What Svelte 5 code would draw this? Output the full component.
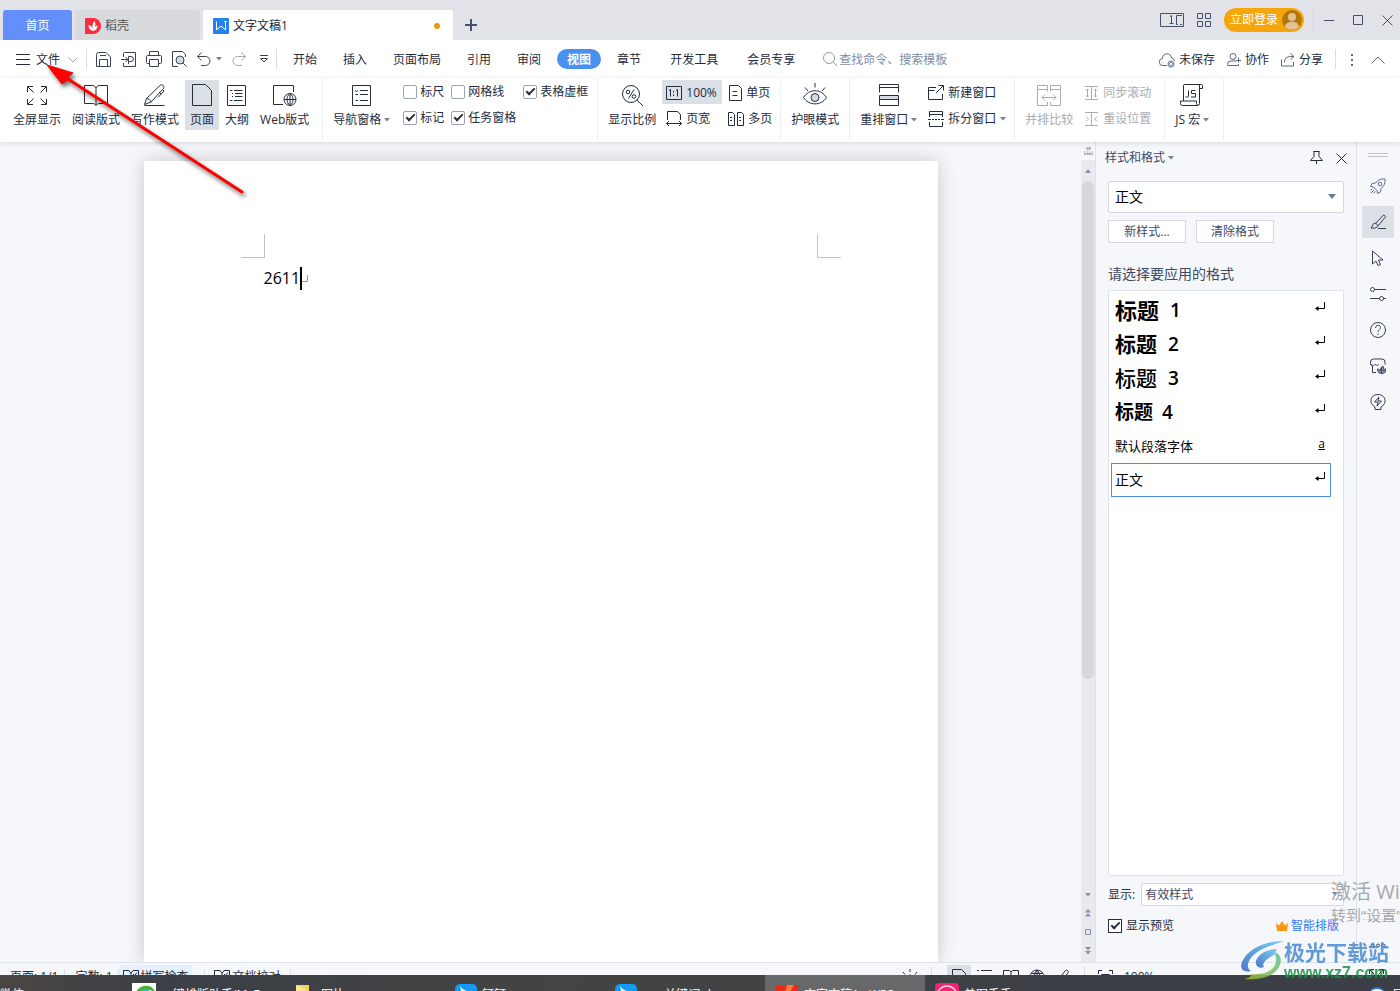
<script>
  const icons = {
    docer: '<path d="M0 0h8a8 8 0 0 1 0 16H0z" fill="#fb2c3c" stroke="none"/><path d="M8 13C4.500 12 3.500 10 3.500 7c2 .5 3.500 2 4 4C7 8 7.500 5 9.500 3c1.500 2.500 1 5.500-.5 8 .5-2 1.500-3 3.500-3.500 0 3-1.500 5-4.500 5.500z" fill="#fff" stroke="none"/>',
    writer: '<rect width="16" height="16" rx="1" fill="#2583f0" stroke="none"/><path d="M3.500 3.500v8.500L8 8l4.500 4V3.500M11 3.500h3" stroke="#fff"/>',
    plus: '<path d="M6 0v12M0 6h12" stroke-width="2"/>',
    pages: '<path d="M.5 .5h23v13H.5zM10 3.500l1.500-1v8.500M9.500 10.500h4"/><path d="M22 2.500h-5.500v9H18M20 11.500h2"/>',
    apps: '<path d="M.5.5h5v5h-5zM8.500.5h5v5h-5zM.5 8.500h5v5h-5zM8.500 8.500h5v5h-5z"/>',
    avatar: '<circle cx="10" cy="10" r="10" fill="#b27708" stroke="none"/><circle cx="10" cy="7" r="4" fill="#e0c391" stroke="none"/><path d="M3 17c0-7 14-7 14 0a10 10 0 0 1-14 0z" fill="#e0c391" stroke="none"/>',
    min: '<path d="M0 5.500h10"/>',
    max: '<path d="M.5.5h9v9h-9z"/>',
    close: '<path d="M.5.5l10 10M10.500.5l-10 10"/>',
    menu: '<path d="M0 .5h14M0 5.500h14M0 10.500h14"/>',
    down: '<path d="M.5.5L5 5l4.500-4.500"/>',
    up: '<path d="M.5 7.500l6.500-6.500 6.500 6.500"/>',
    save: '<path d="M.5 14.500V2.500a2 2 0 0 1 2-2H10L14.500 5v9.500zM3.500 14.500V7.500h8v7M4 3.500h6"/>',
    pdf: '<path d="M2.500 5V1.500a1 1 0 0 1 1-1h11v14h-12V11M0 7.500h7M4.500 5L7 7.500 4.500 10M7.500 12V4.500H10a2.500 2.500 0 0 1 0 5H7"/>',
    print: '<path d="M3.500 4V.5h9V4M3.500 12.500H1.500a1 1 0 0 1-1-1V5.500a1 1 0 0 1 1-1h13a1 1 0 0 1 1 1v6a1 1 0 0 1-1 1h-2M3.500 8.500h9v7h-9z"/>',
    preview: '<path d="M6 15.500H.5V.5h10l3 3V6"/><circle cx="8" cy="9" r="4" fill="#d5d9e0"/><path d="M11 12l3.500 3.500"/>',
    undo: '<path d="M4.500.5L.5 4.500l4 4M.5 4.500H8.500a4.500 4.500 0 0 1 0 9H4"/>',
    redo: '<path d="M9.500.5l4 4-4 4M13.500 4.500H5.500a4.500 4.500 0 0 0 0 9H10"/>',
    caret: '<path d="M0 0h6L3 3.500z" fill="currentColor" stroke="none"/>',
    caretUp: '<path d="M0 4h6L3 0z" fill="currentColor" stroke="none"/>',
    more: '<path d="M0 .5h8M.5 3.500h7L4 7z"/>',
    search: '<circle cx="6" cy="6" r="5.500"/><path d="M10 10l4 4"/>',
    cloud: '<path d="M8 12.500H4a3.500 3.500 0 0 1-.5-7 4.500 4.500 0 0 1 9-.5 3.500 3.500 0 0 1 3 3"/><circle cx="12" cy="11" r="3.500" fill="#8a94ad" stroke="none"/><path d="M10.500 9.500l3 3m0-3l-3 3" stroke="#fff"/>',
    collab: '<circle cx="6" cy="3.500" r="3"/><path d="M9 8H4A3.500 3.500 0 0 0 .5 11.500v1h11v-1.500M11.500 4.500v5M9 7.500h5"/>',
    share: '<path d="M.5 6.500v6.500h12v-4M3.500 9.500c0-4 2-6 6.500-6h3M9.500 .5l3.500 3-3.500 3"/>',
    dots: '<path d="M0 0h2v2H0zM0 5h2v2H0zM0 10h2v2H0z" fill="currentColor" stroke="none"/>',
    full: '<path d="M2.500 9V3.500H8M3 4l5.500 5.500M16 3.500h5.500V9M21 4l-5.500 5.500M2.500 16v5.500H8M3 21l5.500-5.500M16 21.500h5.500V16M21 21l-5.500-5.500"/>',
    read: '<path d="M12 5c-1-2-2.500-2.500-4-2.500H.5v18H8c2 0 3 .5 4 2 1-1.500 2-2 4-2h7.500v-18H16c-1.500 0-3 .5-4 2.500zM12 5v17"/>',
    write: '<path d="M3.500 15.500L17 2.500c2-2 5 .5 3.500 3L8 19l-6.500 2.500zM3.500 15.500c2 0 4 1.500 4.500 3.500M16 9l2 2M1.500 22.500h20M20 7l1 1-6 6.500"/>',
    page: '<path d="M2.500 1.500h13l6 6v15h-19z"/>',
    outline: '<path d="M2.500 2.500h18v20h-18zM5 7.500h2.500M9 7.500h8.500M7 10.500h1M10 10.500h7.500M7 13.500h1M10 13.500h7.500M5 17.500h2.500M9 17.500h8.500"/>',
    web: '<path d="M10 21.500H.5V2.500h20V9"/><circle cx="17" cy="16.500" r="6"/><path d="M11 16.500h12M17 10.500c-4 3-4 9 0 12 4-3 4-9 0-12zM17 10.500v12"/>',
    nav: '<path d="M2.500 2.500h18v20h-18zM5 7.500l1.500 1L8 7.500M10 7.500h8M5.500 11.500H8M10 11.500h8M5.500 17.500H8M10 17.500h8"/>',
    zoom: '<circle cx="11" cy="11" r="8.500"/><path d="M17 17l6 6M14 6.500L8.500 15.500"/><circle cx="8" cy="9" r="1.800"/><circle cx="14" cy="13.500" r="1.800"/>',
    one: '<path d="M.5.500h15v13H.5zM3 4.500l1.500-1v7M10 4.500l1.500-1v7M7.500 5v1.500M7.500 8.500v1.500"/>',
    width: '<path d="M1.500 9V.5h10l3 3V9M0 12.500h16M3 10l-2.500 2.500L3 15M13 10l2.500 2.500L13 15"/>',
    single: '<path d="M.5.5h9l3 3v12H.5zM3.500 6.500H8M3.500 10.500h5"/>',
    multi: '<path d="M.5 1.500h4l2 2v11h-6zM9.500 1.500h4l2 2v11h-6zM2 6.500h2M2 9.500h2M11 6.500h2M11 9.500h2"/>',
    eye: '<path d="M.5 14.500C6 5.500 18 5.500 23.500 14.500 18 23 6 23 .5 14.500zM12 0v4.500M2 4.500L5 8M22 4.500L19 8"/><circle cx="12" cy="14.500" r="4" fill="#d5d9e0"/>',
    arrange: '<path d="M2.500 9.500v-8h19v8M2.500 4.500h19M2.500 12.500h19v10h-19z"/><path d="M3 13h18v3H3z" fill="#d5d9e0" stroke="none"/><path d="M2.500 16.500h19"/>',
    newwin: '<path d="M8 2.500H.5v12h14V9M.5 5.500h6M10.500.5h5v5M15.500.5L8 8"/>',
    split: '<path d="M1.500 6V.5h13V6M1.500 3.500h13M0 8.500h3m1 0h2m1 0h2m1 0h2m1 0h3M1.500 11v4.500h13V11"/>',
    compare: '<path d="M8 22.500H.5v-20h10v6M.5 6.500h10M16 22.500h7.500v-20h-10v6M23.500 6.500h-10M5 14.500h14M8 11.500l-3 3 3 3M16 11.500l3 3-3 3M10.500 19v3.500H8M13.500 19v3.500H16"/>',
    sync: '<path d="M0 .5h13M0 13.500h13M6.500.5v13M2.500 3v8M1 4.500L2.500 3 4 4.500M1 9.500L2.500 11 4 9.500M10.500 3v8M9 4.500L10.500 3 12 4.500M9 9.500l1.500 1.500L12 9.500"/>',
    reset: '<path d="M0 .5h13M0 13.500h13M6.500.5v13M1 4.500L3.500 7 1 9.500M12 4.500L9.500 7 12 9.500"/>',
    js: '<path d="M3.500 18V2.500a1 1 0 0 1 1-1h17a1 1 0 0 1 1 1v3h-3.500M19.500 2v18.500a2 2 0 0 1-2 2h-15a2 2 0 0 1-2-2v-2.500h16v2.500a2 2 0 0 0 1.500 2M8.500 7.500v5.500c0 1.500-2 1.500-3 .5M15.500 7.500h-4v3h4v3.500h-4.500"/>',
    pin: '<path d="M3.500.5h6M4 .5v5L.5 9.500h12L9 5.500v-5M6.500 9.500V13"/>',
    bars: '<path d="M0 .5h20M0 3.500h20" stroke="#bfc4ce"/>',
    rocket: '<path d="M15 1C10.500.5 8 2 5.500 5L2 5.500.5 8.500l3 .5L7 12.500l.5 3 3-1.500.5-3.500C14 8 15.500 5.500 15 1zM4 12l-3 3M2.500 10.500L.5 12.500M5.500 13.500l-2 2"/><circle cx="10" cy="6" r="1.800"/>',
    brush: '<path d="M5.500 9.500L13 1.500c1-1 3 .5 2 2L8 12M5.500 9c-3 0-2.500 3-4.500 5 3 .5 6.500 0 7-2.500zM8 14.500h8"/>',
    cursor: '<path d="M2.500 1v13l3.500-3 2 4.500 2.500-1L8.500 10H13z"/>',
    sliders: '<circle cx="2.500" cy="3.500" r="2"/><path d="M4.500 3.500H16M0 12.500h9M13 12.500h3"/><circle cx="11.500" cy="12.500" r="2"/>',
    help: '<circle cx="8" cy="8" r="7.500"/><path d="M5.500 6c0-3.500 5-3.500 5-.5C10.500 7.500 8 7.500 8 10M8 11.500v1.500"/>',
    shop: '<path d="M6 14.500H2.500V8C.5 7.500.5 5 .5 4a3 3 0 0 1 3-3h8.500a3 3 0 0 1 3 3v2.500M.5 6c2 2.500 4 1.500 4.500 0 .5 1.500 3 2 4 0"/><path d="M11.500 15.500c-3 0-4-2-4-4.500 1.500 0 2.500 1 3 2 0-2 .5-4 2-5 1.500 1 1.500 3 1 5 .5-1 1-2 2.500-2 0 3-1.500 4.500-4.500 4.500zM11.500 15V10" fill="#8e96a8"/>',
    bulb: '<path d="M5 13C-1.500 9.500 0 .5 8 .5s9.500 9 3 12.500v2.500H5zM9 3L4.500 8H8l-1 4 4.500-5H8z"/>',
    ret: '<path d="M9.500 0v6.500H1"/><path d="M0 6.500L3.500 4v5z" fill="currentColor" stroke="none"/>',
    crown: '<path d="M0 2l3 2.500L6 0l3 4.500L12 2l-1 8H1z" fill="#ff9511" stroke="none"/>',
    ruler: '<path d="M2 0h5v3H2zM0 4h1v2h2V4h1v2h1V4h1v2h2V4h1v4H0z" fill="#b4bccd" stroke="none"/>',
    dblUp: '<path d="M0 3.500h6L3 0zM0 7.500h6L3 4z" fill="currentColor" stroke="none"/>',
    dblDown: '<path d="M0 0h6L3 3.500zM0 4h6L3 7.500z" fill="currentColor" stroke="none"/>',
    square: '<path d="M.5.5h5v5h-5z"/>',
    threeDots: '<circle cx="2.500" cy="2.500" r="1.500"/><circle cx="8" cy="2.500" r="1.500"/><circle cx="13.500" cy="2.500" r="1.500"/>',
    book: '<path d="M8 4.500L6 1.500H.5v13H8zM8 4.500l2-3h5.500v13H8M10 5l1.500 1.500L14 3.500"/>',
    sun: '<circle cx="8" cy="10" r="4"/><path d="M8 0v3M1 3l2 2.500M15 3l-2 2.500"/>',
    docSmall: '<path d="M1.500.5h9l4 4v11h-13z"/>',
    list: '<path d="M0 1.500h2M4 1.500h11M0 6.500h2M4 6.500h11M0 11.500h2M4 11.500h11"/>',
    bookSmall: '<path d="M8 3L6.500 1.500h-6v13H8zM8 3l1.500-1.500h6v13H8"/>',
    globe: '<circle cx="8" cy="8" r="7"/><path d="M1 8h14M2 4.500h12M8 1v14M8 1c-4 4-4 10 0 14 4-4 4-10 0-14z"/>',
    pen: '<path d="M1 14L10 2c2-2 4 0 3 2L5 13z"/>',
    fit: '<path d="M.5 5V1.500H4M11 1.500h3.500V5M3.500 5.500h8v5h-8z"/>',
    expand: '<path d="M.5 5V.5H5M.5.5l5 5M10 .5h4.500V5M14.500.5l-5 5"/>',
    swirl: '<path d="M0 0h24v24H0z" fill="#fff" stroke="none"/><path d="M2 14C4 1 20-1 23 9c-8-4-13-2-16 9z" fill="#45b52f" stroke="none"/><path d="M6 15C8 6 16 4 20 10c-5 0-9 3-10 9z" fill="#41b5f0" stroke="none"/>',
    folder: '<path d="M0 0h13v20H0z" fill="#f5cf68" stroke="none"/><path d="M0 0l10 4v16H0z" fill="#ffe293" stroke="none"/>',
    ding: '<rect width="22" height="22" rx="5" fill="#129bf5" stroke="none"/><path d="M5 2c2 4 8 5 12 8l-5 9-5-8z" fill="#fff" stroke="none"/>',
    wps: '<path d="M0 2h24l-5 18h-7l-2-7-3 7H4z" fill="#f0281c" stroke="none"/><path d="M12 2h7l-5 9-4-1z" fill="#ff7a2e" stroke="none"/>',
    pink: '<rect width="24" height="24" rx="4" fill="#f4236f" stroke="none"/><circle cx="12" cy="13" r="10" stroke="#ffd6e6" stroke-width="1.500"/>',
    ball: '<circle cx="8" cy="8" r="8" fill="#2577e8" stroke="none"/><ellipse cx="8" cy="5" rx="6" ry="3" fill="#fff" stroke="none"/>'
  };

  const tabs = ['开始', '插入', '页面布局', '引用', '审阅', '视图', '章节', '开发工具', '会员专享'];
  const styles = [
    { name: '标题', n: '1', cls: 'h1' },
    { name: '标题', n: '2', cls: 'h2' },
    { name: '标题', n: '3', cls: 'h3' },
    { name: '标题', n: '4', cls: 'h4' },
    { name: '默认段落字体', cls: 'char' },
    { name: '正文', cls: 'body' }
  ];
  const side = ['rocket', 'brush', 'cursor', 'sliders', 'help', 'shop', 'bulb'];
  const checks = [
    { t: '标尺', on: false }, { t: '网格线', on: false }, { t: '表格虚框', on: true },
    { t: '标记', on: true }, { t: '任务窗格', on: true }
  ];
</script>

{#snippet icon(name, w, h = w)}
  <svg class="icon" width={w} height={h} viewBox="0 0 {w} {h}" aria-hidden="true">{@html icons[name]}</svg>
{/snippet}

{#snippet big(name, label, cls = '', menu = false)}
  <button class="big {cls}">
    {@render icon(name, 24)}
    <span class="label">{label}{#if menu}<span class="car">{@render icon('caret', 6, 4)}</span>{/if}</span>
  </button>
{/snippet}

{#snippet small(name, w, h, label, cls = '', menu = false)}
  <button class="small {cls}">
    <span class="slot">{@render icon(name, w, h)}</span><span>{label}</span>{#if menu}<span class="car">{@render icon('caret', 6, 4)}</span>{/if}
  </button>
{/snippet}

<div class="app">
  <header class="titlebar">
    <button class="doc home">首页</button>
    <button class="doc docer">{@render icon('docer', 16)}稻壳</button>
    <button class="doc current">{@render icon('writer', 16)}文字文稿1<i class="dirty"></i></button>
    <button class="add" aria-label="新建">{@render icon('plus', 12)}</button>
    <div class="window">
      <button aria-label="窗口">{@render icon('pages', 24, 14)}</button>
      <button class="apps" aria-label="应用">{@render icon('apps', 14)}</button>
      <button class="login">立即登录{@render icon('avatar', 20)}</button>
      <i class="sep"></i>
      <button class="w" aria-label="最小化">{@render icon('min', 10)}</button>
      <button class="w" aria-label="最大化">{@render icon('max', 10)}</button>
      <button class="w" aria-label="关闭">{@render icon('close', 11)}</button>
    </div>
  </header>

  <nav class="menubar">
    <button class="file">{@render icon('menu', 14, 12)}<span>文件</span><span class="muted">{@render icon('down', 10, 6)}</span></button>
    <i class="sep"></i>
    <div class="quick">
      <button aria-label="保存">{@render icon('save', 15)}</button>
      <button aria-label="输出为PDF">{@render icon('pdf', 15)}</button>
      <button aria-label="打印">{@render icon('print', 16)}</button>
      <button aria-label="打印预览">{@render icon('preview', 15, 16)}</button>
      <button class="undo" aria-label="撤消">{@render icon('undo', 14)}<span class="car">{@render icon('caret', 6, 4)}</span></button>
      <button class="muted" aria-label="恢复">{@render icon('redo', 14)}</button>
      <button class="morebtn" aria-label="更多">{@render icon('more', 8)}</button>
    </div>
    <i class="sep"></i>
    <div class="tabs">
      {#each tabs as t, i}
        <button class:active={t === '视图'} class:extra={i > 6}>{t}</button>
      {/each}
    </div>
    <label class="search">{@render icon('search', 15)}<input aria-label="查找" placeholder="查找命令、搜索模板" /></label>
    <div class="account">
      <button>{@render icon('cloud', 16, 15)}未保存</button>
      <button>{@render icon('collab', 14)}协作</button>
      <button>{@render icon('share', 14)}分享</button>
      <i class="sep"></i>
      <button class="dots" aria-label="更多">{@render icon('dots', 2, 12)}</button>
      <button aria-label="收起">{@render icon('up', 14, 8)}</button>
    </div>
  </nav>

  <section class="ribbon">
    <div class="group first">
      {@render big('full', '全屏显示')}
      {@render big('read', '阅读版式')}
      {@render big('write', '写作模式')}
      {@render big('page', '页面', 'on')}
      {@render big('outline', '大纲')}
      {@render big('web', 'Web版式')}
    </div>
    <div class="group">
      {@render big('nav', '导航窗格', '', true)}
      <div class="checks">
        {#each checks as c}
          <label><input type="checkbox" checked={c.on} />{c.t}</label>
        {/each}
      </div>
    </div>
    <div class="group">
      {@render big('zoom', '显示比例')}
      <div class="pairs">
        {@render small('one', 16, 14, '100%', 'on')}
        {@render small('single', 13, 16, '单页')}
        {@render small('width', 16, 16, '页宽')}
        {@render small('multi', 16, 16, '多页')}
      </div>
    </div>
    <div class="group">{@render big('eye', '护眼模式')}</div>
    <div class="group">
      {@render big('arrange', '重排窗口', '', true)}
      <div class="stack">
        {@render small('newwin', 16, 16, '新建窗口')}
        {@render small('split', 16, 16, '拆分窗口', '', true)}
      </div>
    </div>
    <div class="group dim">
      {@render big('compare', '并排比较')}
      <div class="stack">
        {@render small('sync', 13, 14, '同步滚动')}
        {@render small('reset', 13, 14, '重设位置')}
      </div>
    </div>
    <div class="group">{@render big('js', 'JS 宏', '', true)}</div>
  </section>

  <main class="workspace">
    <div class="canvas">
      <article class="page">
        <i class="corner left"></i>
        <i class="corner right"></i>
        <p>2611<i class="cursor"></i><span class="ret">{@render icon('ret', 10)}</span></p>
      </article>
    </div>
    <div class="scroll">
      <div class="rulerbtn">{@render icon('ruler', 9, 8)}</div>
      <div class="arrow">{@render icon('caretUp', 6, 4)}</div>
      <div class="track"><div class="thumb"></div></div>
      <div class="jump">
        {@render icon('caret', 6, 4)}
        {@render icon('dblUp', 6, 8)}
        {@render icon('square', 6)}
        {@render icon('dblDown', 6, 8)}
      </div>
    </div>
    <aside class="panel">
      <div class="head">
        <span>样式和格式</span><span class="car">{@render icon('caret', 6, 4)}</span>
        <button class="push" aria-label="固定">{@render icon('pin', 13, 14)}</button>
        <button aria-label="关闭窗格">{@render icon('close', 11)}</button>
      </div>
      <div class="pick">
        <select aria-label="当前样式"><option>正文</option></select>
        <svg class="drop" width="8" height="5" viewBox="0 0 8 5"><path d="M0 0h8L4 5z" fill="#6d7c9c" /></svg>
      </div>
      <div class="actions"><button>新样式...</button><button>清除格式</button></div>
      <h2>请选择要应用的格式</h2>
      <ul>
        {#each styles as s}
          <li class={s.cls}>
            <span>{s.name}</span>{#if s.n}<b>{s.n}</b>{/if}
            <span class="mark">{#if s.cls === 'char'}<u>a</u>{:else}{@render icon('ret', 10)}{/if}</span>
          </li>
        {/each}
      </ul>
      <div class="show">
        <label for="show">显示:</label>
        <div class="pick">
          <select id="show"><option>有效样式</option></select>
          <svg class="drop" width="6" height="4" viewBox="0 0 6 4"><path d="M0 0h6L3 4z" fill="#6d7c9c" /></svg>
        </div>
      </div>
      <div class="foot">
        <label><input type="checkbox" checked />显示预览</label>
        <a href="#smart">{@render icon('crown', 12, 11)}智能排版</a>
      </div>
    </aside>
    <div class="sidebar">
      <span class="grip">{@render icon('bars', 20, 4)}</span>
      {#each side as s}
        <button class:on={s === 'brush'} class={s} aria-label={s}>{@render icon(s, 16)}</button>
      {/each}
      <span class="rule"></span>
      <button class="end" aria-label="设置">{@render icon('threeDots', 16, 5)}</button>
    </div>
  </main>

  <footer class="status">
    <div class="inner">
      <span class="cell a">页面: 1/1</span>
      <span class="cell b">字数: 1</span>
      <span class="cell"><button class="spell">{@render icon('book', 16)}拼写检查</button></span>
      <span class="cell d">{@render icon('book', 16)}文档校对</span>
      <span class="views">
        <button aria-label="护眼">{@render icon('sun', 16)}</button>
        <i class="sep"></i>
        <button class="on" aria-label="页面视图">{@render icon('docSmall', 16)}</button>
        <button aria-label="大纲视图">{@render icon('list', 16)}</button>
        <button aria-label="阅读视图">{@render icon('bookSmall', 16)}</button>
        <button aria-label="Web视图">{@render icon('globe', 16)}</button>
        <button aria-label="写作视图">{@render icon('pen', 16)}</button>
        <i class="sep"></i>
        <button aria-label="适合页面">{@render icon('fit', 16)}</button>
        <span class="pct">100%</span>
        <button aria-label="全屏">{@render icon('expand', 16)}</button>
      </span>
    </div>
  </footer>

  <footer class="taskbar">
    <div class="task t0">微信</div>
    <div class="task">{@render icon('swirl', 24)}一键排版助手(MyE...</div>
    <div class="task dir">{@render icon('folder', 13, 20)}图片</div>
    <div class="task">{@render icon('ding', 22)}钉钉</div>
    <div class="task">{@render icon('ding', 22)}wps关键词.d...</div>
    <div class="task on">{@render icon('wps', 24)}文字文稿1 - WPS ...</div>
    <div class="task">{@render icon('pink', 24)}美图秀秀</div>
    <div class="tray">{@render icon('ball', 16)}国</div>
  </footer>

  <div class="activate"><div>激活 Wi</div><small>转到“设置”</small></div>

  <div class="brand">
    <svg width="44" height="42" viewBox="0 0 44 42" aria-hidden="true">
      <defs>
        <linearGradient id="gb" x1="0" y1="1" x2="1" y2="0"><stop offset="0" stop-color="#2e65bd" /><stop offset="1" stop-color="#68c7f4" /></linearGradient>
        <linearGradient id="gg" x1="0" y1="1" x2="1" y2="0"><stop offset="0" stop-color="#a7b827" /><stop offset="1" stop-color="#57c39a" /></linearGradient>
      </defs>
      <path d="M44 1C25 1 8 9 2 22c-3 7 2 11 9 9-6-3-3-12 5-18C24 7 34 5 44 1z" fill="url(#gb)" />
      <path d="M37 9c-10 0-19 5-21 12-1 5 3 8 8 6-3-4 4-9 10-12z" fill="url(#gb)" />
      <path d="M34 12c8 2 9 10 3 18-6 7-18 10-33 9 5-1 7-2 7-5 10 1 21-2 24-9 2-5 1-9-1-13z" fill="url(#gg)" />
    </svg>
    <div><strong>极光下载站</strong><span>www.xz7.com</span></div>
  </div>

  <svg class="pointer" width="260" height="210" viewBox="0 0 260 210" aria-hidden="true">
    <path d="M68 79L242 192" stroke="#f00" stroke-width="3" stroke-linecap="round" />
    <path d="M47 65L73 73 68 77 67 80 62 84z" fill="#f00" stroke="#f00" />
  </svg>
</div>

<style>
  :global(body) { margin: 0; }
  .app {
    position: relative; display: flex; flex-direction: column; height: 100vh; overflow: hidden;
    font: 12px/16px "Open Sans", "Noto Sans CJK SC", sans-serif; color: #252c3d; background: #f5f7fa;
  }
  .app :global(svg) { flex: none; display: block; }
  .icon { fill: none; stroke: currentColor; }
  button { font: inherit; color: inherit; background: none; border: 0; padding: 0; display: flex; align-items: center; white-space: nowrap; }
  .car { color: #75819c; }
  .muted { color: #a5a9b2; }
  .sep { width: 1px; height: 20px; background: #d9dce3; flex: none; }

  .titlebar { display: flex; align-items: flex-end; height: 40px; background: #e1e3e8; padding-left: 3px; color: #44506c; flex: none; }
  .doc { height: 30px; gap: 4px; border-radius: 3px 3px 0 0; margin-right: 3px; padding-top: 2px; }
  .home { width: 69px; justify-content: center; background: #638ffb; color: #fff; }
  .docer { width: 125px; background: #d8dade; padding-left: 10px; color: #555; }
  .current { width: 250px; background: #fff; padding: 2px 13px 0 10px; color: #202735; margin-right: 12px; }
  .dirty { width: 6px; height: 6px; border-radius: 50%; background: #e99a08; margin-left: auto; }
  .add { height: 30px; }
  .window { margin-left: auto; height: 40px; display: flex; align-items: center; padding-right: 7px; }
  .apps { margin: 0 13px; }
  .login { height: 24px; border-radius: 12px; background: #f6a60d; color: #fff; gap: 4px; padding: 0 2px 0 6px; margin-right: 8px; }
  .w { width: 11px; margin-left: 18px; }
  .sep + .w { margin-left: 11px; }

  .menubar { display: flex; align-items: center; height: 38px; background: #fff; flex: none; }
  .menubar button { padding-top: 2px; }
  .menubar .file { padding: 2px 8px 0 16px; gap: 6px; }
  .file .muted { margin-left: 2px; }
  .quick { display: flex; align-items: center; padding: 0 8px 0 9px; gap: 10px; color: #3a4256; }
  .quick button { padding: 0; }
  .undo { gap: 5px; }
  .morebtn { margin-left: 4px; }
  .tabs { display: flex; gap: 6px; padding-left: 6px; }
  .menubar .tabs button { height: 20px; padding: 1px 10px 0; border-radius: 10px; }
  .tabs .active { background: #4a90f0; color: #fff; font-weight: 600; }
  .tabs .extra { margin-left: 3px; }
  .search { display: flex; align-items: center; margin-left: 18px; gap: 1px; color: #929cb4; }
  input { font: inherit; }
  .search input { width: 120px; border: 0; padding: 1px 0 0; outline: 0; background: none; }
  .search input::placeholder { color: #808ba6; opacity: 1; }
  .account { margin-left: auto; display: flex; align-items: center; gap: 12px; padding-right: 15px; }
  .account button { gap: 4px; }
  .account :global(svg) { color: #5d6881; }
  .account .dots { margin: 0 6px 0 3px; }

  .ribbon { display: flex; height: 64px; background: #fff; flex: none; box-shadow: 0 1px 5px #00000022; position: relative; }
  .group { display: flex; padding: 2px 5px 0; height: 60px; border-right: 1px solid #eceef1; gap: 1px; }
  .first { padding: 2px 8px 0; }
  .big { height: 50px; flex-direction: column; padding: 3px 5px 1px; justify-content: space-between; }
  .label { display: flex; align-items: center; line-height: 18px; }
  .car { margin-left: 3px; }
  .undo .car { margin-left: 0; }
  .on { background: #dbdfe6; }
  .dim, .dim .car { color: #a9abb0; }
  .checks { display: grid; grid-template-columns: 48px 72px 69px; grid-template-rows: 24px 24px; row-gap: 2px; padding-left: 7px; }
  .checks label { display: flex; align-items: center; gap: 3px; white-space: nowrap; }
  input[type="checkbox"] { appearance: none; flex: none; width: 14px; height: 14px; margin: 0; border: 1px solid #9ca3b1; border-radius: 2px; background: #fff; display: grid; place-items: center; }
  input[type="checkbox"]:checked::after { content: ""; width: 7px; height: 3px; border: solid #252c3d; border-width: 0 0 2px 2px; transform: rotate(-45deg); margin-bottom: 3px; }
  .pairs { display: grid; grid-template-columns: 60px 50px; grid-template-rows: 24px 24px; gap: 2px; padding-right: 1px; }
  .small { padding: 1px 4px 0; gap: 4px; height: 24px; }
  .small .car { margin-left: 0; }
  .slot { width: 16px; display: grid; place-items: center; }
  .stack { display: flex; flex-direction: column; gap: 2px; padding-left: 1px; }
  .group:nth-child(5) { padding-right: 4px; }
  .dim .stack { padding: 0 4px 0 0; }
  .group:last-child { padding-right: 9px; }

  .workspace { display: flex; flex: 1; min-height: 0; }
  .canvas { flex: 1; display: flex; justify-content: center; padding-top: 19px; overflow: hidden; min-width: 0; }
  .page { position: relative; width: 794px; background: #fff; box-shadow: 0 0 18px #00000030; padding: 105px 120px 0; box-sizing: border-box; }
  .page p { margin: 0; font-size: 16px; line-height: 24px; display: flex; align-items: center; color: #000; }
  .page .cursor { width: 2px; height: 23px; background: #000; }
  .ret { color: #999; width: 6px; overflow: hidden; display: flex; justify-content: flex-end; padding-top: 4px; }
  .corner { position: absolute; top: 73px; width: 23px; height: 23px; border-bottom: 1px solid #c3c3c3; }
  .corner.left { left: 97px; border-right: 1px solid #c3c3c3; }
  .corner.right { right: 97px; border-left: 1px solid #c3c3c3; }
  .scroll { width: 14px; display: flex; flex-direction: column; align-items: center; background: #e8eaf0; color: #8590aa; border-right: 1px solid #dfe2e8; }
  .rulerbtn { background: #f5f7fa; width: 14px; height: 18px; display: grid; place-items: center; }
  .arrow { height: 21px; display: grid; place-items: center; }
  .track { flex: 1; width: 12px; }
  .thumb { height: 70%; border-radius: 6px; background: #d4d7de; }
  .jump { display: flex; flex-direction: column; align-items: center; gap: 12px; padding-bottom: 7px; }

  .panel { width: 236px; padding: 0 12px; display: flex; flex-direction: column; color: #3f4962; }
  .head { display: flex; align-items: center; height: 30px; margin: 0 -3px; padding-top: 1px; }
  .push { margin: 0 13px 0 auto; color: #252c3d; }
  .head button:last-child { color: #252c3d; }
  .pick { position: relative; display: flex; flex: none; }
  select { appearance: none; width: 100%; height: 32px; margin: 0; padding: 0 6px; border: 1px solid #d3d7de; border-radius: 2px; background: #fff; font: inherit; color: #000; font-size: 14px; }
  .head + .pick { margin-top: 8px; }
  .drop { position: absolute; right: 8px; top: 13px; }
  .actions { display: flex; gap: 10px; margin-top: 7px; }
  .actions button { width: 78px; height: 23px; justify-content: center; border: 1px solid #d3d7de; background: #fff; padding-top: 1px; }
  h2 { font-size: 14px; line-height: 20px; font-weight: 400; margin: 21px 0 6px; }
  ul { list-style: none; margin: 0; padding: 2px; flex: 1; border: 1px solid #dfe2e8; border-radius: 2px; background: #fff; color: #000; }
  li { display: flex; align-items: center; height: 34px; box-sizing: border-box; padding: 0 6px 0 4px; margin-right: 10px; }
  li b { margin-left: 11px; font-size: 19px; font-weight: 600; }
  .h1 { font-size: 22px; font-weight: 600; }
  .h2 { font-size: 21px; font-weight: 700; }
  .h3 { font-size: 21px; font-weight: 500; }
  .h4 { font-size: 19px; font-weight: 700; }
  .h4 b { margin-left: 9px; }
  .char { font-size: 13px; }
  .body { font-size: 14px; border: 1px solid #4a90e2; padding: 0 5px 0 3px; }
  .mark { margin-left: auto; padding-bottom: 6px; }
  .mark u { font-size: 12px; }
  .show { display: flex; align-items: center; margin-top: 7px; gap: 6px; color: #252c3d; }
  .show .pick { flex: 1; }
  .show select { height: 23px; font-size: 12px; padding: 0 3px; color: #3f4962; }
  .show .drop { top: 9px; right: 6px; }
  .foot { display: flex; justify-content: space-between; padding: 12px 5px 28px 0; color: #252c3d; }
  .foot label { display: flex; align-items: center; gap: 4px; }
  .foot input[type="checkbox"] { border-color: #252c3d; border-radius: 0; }
  .foot a { display: flex; align-items: center; gap: 3px; color: #3478f6; text-decoration: none; }
  .sidebar { width: 42px; padding-right: 1px; border-left: 1px solid #dfe2e8; display: flex; flex-direction: column; align-items: center; gap: 4px; color: #363f55; }
  .grip { padding: 11px 0 9px; }
  .sidebar button { width: 32px; height: 32px; justify-content: center; border-radius: 2px; }
  .sidebar .rocket { color: #5d6a8a; }
  .rule { width: 32px; height: 1px; background: #dfe2e8; margin: auto 0 5px; }
  .sidebar .end { margin-bottom: 1px; }

  .status { height: 12px; border-top: 1px solid #dfe2e8; overflow: hidden; flex: none; background: #f5f7fa; }
  .inner { display: flex; align-items: center; height: 28px; }
  .cell { display: flex; align-items: center; height: 16px; border-right: 1px solid #dfe2e8; gap: 3px; }
  .a { padding: 0 6px 0 10px; }
  .b { padding: 0 5px 0 10px; }
  .spell { background: #e6f0fc; height: 24px; padding: 0 3px 0 4px; gap: 2px; margin-right: 12px; }
  .d { padding: 0 9px; }
  .views { margin-left: auto; display: flex; align-items: center; padding-right: 15px; gap: 10px; }
  .views .on { padding: 4px; margin: 0 -4px 0 2px; }
  .views .sep { margin: 0 3px; }
  .pct { width: 235px; }

  .taskbar { height: 16px; overflow: hidden; flex: none; display: flex; align-items: flex-start; background: linear-gradient(90deg, #4a4541, #3b4048 12%, #444442 40%, #3c4046 75%); color: #fff; }
  .task { display: flex; align-items: center; gap: 5px; width: 160px; height: 40px; padding-left: 10px; box-sizing: border-box; flex: none; white-space: nowrap; }
  .t0 { width: 122px; padding: 0; }
  .task.dir { padding-left: 14px; width: 163px; gap: 12px; }
  .task.on { background: #66686a; }
  .tray { margin-left: auto; height: 40px; display: flex; align-items: center; gap: 8px; width: 31px; overflow: hidden; flex: none; }

  .activate { position: absolute; left: calc(100% - 69px); bottom: 66px; color: #a5a8ad; font-size: 20px; line-height: 26px; white-space: nowrap; }
  .activate small { font-size: 15px; line-height: 20px; display: block; }
  .brand { position: absolute; right: 11px; bottom: 9px; display: flex; align-items: center; white-space: nowrap; opacity: .85; }
  .brand div { display: flex; flex-direction: column; }
  .brand strong { font-size: 21px; line-height: 24px; color: #4a8bd0; }
  .brand span { font: bold 16px/18px "Liberation Sans", sans-serif; color: #1d9146; }
  .pointer { position: absolute; left: 0; top: 0; fill: none; filter: drop-shadow(2px 3px 2px #0009); pointer-events: none; }
</style>
